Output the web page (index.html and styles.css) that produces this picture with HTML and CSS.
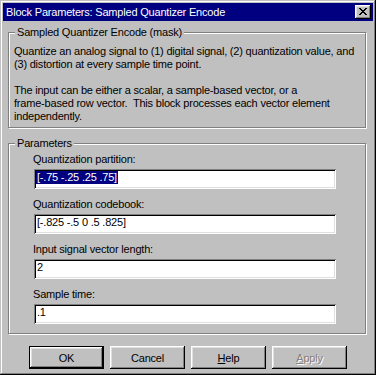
FILE: index.html
```html
<!DOCTYPE html>
<html lang="en">
<head>
    <meta charset="UTF-8">
    <title>Block Parameters: Sampled Quantizer Encode</title>
    <link rel="stylesheet" href="styles.css">
</head>
<body>
    <div class="window">
        <div class="titlebar">
            <span class="title">Block Parameters: Sampled Quantizer Encode</span>
            <button class="close" type="button" aria-label="Close">
                <svg width="8" height="7" viewBox="0 0 8 7" shape-rendering="crispEdges">
                    <path d="M0 0h2v1h-2z M6 0h2v1h-2z M1 1h2v1h-2z M5 1h2v1h-2z M2 2h4v1h-4z M3 3h2v1h-2z M2 4h4v1h-4z M1 5h2v1h-2z M5 5h2v1h-2z M0 6h2v1h-2z M6 6h2v1h-2z" fill="#000"/>
                </svg>
            </button>
        </div>

        <div class="dialog">
            <div class="group mask">
                <span class="legend">Sampled Quantizer Encode (mask)</span>
                <p>Quantize an analog signal to (1) digital signal, (2) quantization value, and<br>(3) distortion at every sample time point.</p>
                <p>The input can be either a scalar, a sample-based vector, or a<br>frame-based row vector.&nbsp; This block processes each vector element<br>independently.</p>
            </div>

            <div class="group params">
                <span class="legend">Parameters</span>

                <label class="field-label">Quantization partition:</label>
                <div class="field"><span class="selected">[-.75 -.25 .25 .75]</span></div>

                <label class="field-label">Quantization codebook:</label>
                <div class="field">[-.825 -.5 0 .5 .825]</div>

                <label class="field-label">Input signal vector length:</label>
                <div class="field">2</div>

                <label class="field-label">Sample time:</label>
                <div class="field">.1</div>
            </div>

            <div class="buttons">
                <button class="btn default" type="button">OK</button>
                <button class="btn" type="button">Cancel</button>
                <button class="btn" type="button"><u>H</u>elp</button>
                <button class="btn" type="button" disabled><u>A</u>pply</button>
            </div>
        </div>
    </div>
</body>
</html>
```

FILE: styles.css
```css
* { box-sizing: border-box; }
body {
    margin: 0;
    background: #c0c0c0;
    font-family: "Liberation Sans", Arial, sans-serif;
    font-size: 11px;
    letter-spacing: -0.2px;
    color: #000;
}
.window {
    width: 376px;
    height: 375px;
    padding: 3px;
    background: #c0c0c0;
    box-shadow: inset -1px -1px #000, inset 1px 1px #c0c0c0,
                inset -2px -2px #808080, inset 2px 2px #fff;
}
.titlebar {
    height: 18px;
    display: flex;
    align-items: center;
    padding: 0 2px 0 3px;
    background: #000080;
    color: #fff;
    white-space: nowrap;
}
.close {
    margin-left: auto;
    width: 16px;
    height: 14px;
    padding: 0;
    border: none;
    background: #c0c0c0;
    display: flex;
    align-items: center;
    justify-content: center;
    box-shadow: inset -1px -1px #000, inset 1px 1px #fff,
                inset -2px -2px #808080, inset 2px 2px #dfdfdf;
}
.close svg { display: block; margin: 0 0 1px 0; }

.dialog {
    padding: 11px 7px 0 5px;
}
.group {
    position: relative;
    border: 1px solid #808080;
    box-shadow: inset 1px 1px #fff, 1px 1px #fff;
}
.legend {
    position: absolute;
    top: -7px;
    left: 6px;
    padding: 0 2px;
    line-height: 13px;
    background: #c0c0c0;
    white-space: nowrap;
}
.mask {
    height: 96px;
    padding: 12px 0 0 5px;
}
.mask p {
    margin: 0 0 13px;
    line-height: 13px;
    white-space: nowrap;
}
.params {
    margin-top: 15px;
    height: 191px;
    padding: 9px 0 9px 0;
}
.field-label {
    display: block;
    padding-left: 24px;
    line-height: 13px;
}
.field {
    width: 302px;
    height: 20px;
    margin: 3px 0 9px 25px;
    padding: 2px 0 0 3px;
    background: #fff;
    line-height: 13px;
    white-space: nowrap;
    box-shadow: inset 1px 1px #808080, inset -1px -1px #fff,
                inset 2px 2px #000, inset -2px -2px #dfdfdf;
}
.field:last-child { margin-bottom: 0; }
.selected {
    display: inline-block;
    margin-left: -1px;
    padding: 0 1px;
    background: #000080;
    color: #fff;
}

.buttons {
    display: flex;
    gap: 6px;
    margin-top: 12px;
    padding-left: 21px;
}
.btn {
    width: 75px;
    height: 23px;
    padding: 0;
    border: none;
    background: #c0c0c0;
    font-family: inherit;
    font-size: 11px;
    letter-spacing: inherit;
    color: #000;
    box-shadow: inset -1px -1px #000, inset 1px 1px #fff,
                inset -2px -2px #808080, inset 2px 2px #dfdfdf;
}
.btn.default {
    border: 1px solid #000;
}
.btn:disabled {
    color: #808080;
    text-shadow: 1px 1px #fff;
}
```
